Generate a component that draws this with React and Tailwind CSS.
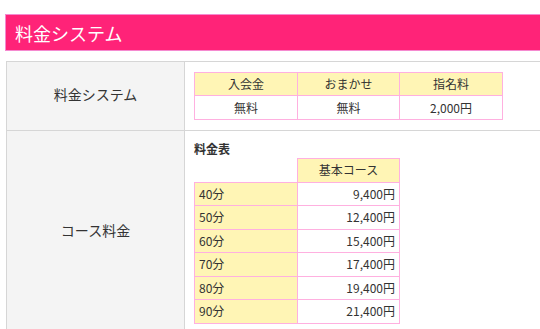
export default function App() {
  const rows = [
    ["40分", "9,400円"],
    ["50分", "12,400円"],
    ["60分", "15,400円"],
    ["70分", "17,400円"],
    ["80分", "19,400円"],
    ["90分", "21,400円"],
  ];
  const font = { fontFamily: '"Noto Sans CJK JP", "Noto Sans", sans-serif' };
  return (
    <div className="w-[540px] h-[329px] overflow-hidden bg-white" style={font}>
      <div className="w-[600px] pt-[14px] pl-[5px]">
        <div className="h-[37px] bg-[#ff2378] border border-[#f58ad0] flex items-center pl-[9px] text-white text-[18px] leading-none">
          料金システム
        </div>
        <table className="mt-[10px] ml-px w-[560px] border-collapse text-[#333]">
          <tbody>
            <tr>
              <th className="w-[178px] h-[69px] bg-[#f4f4f4] border border-[#d6d6d6] text-[14px] font-normal pb-[3px]">
                料金システム
              </th>
              <td className="border border-[#d6d6d6] align-top pl-[9px] pt-[10px]">
                <table className="border-collapse text-[12px]">
                  <tbody>
                    <tr className="h-[23px]">
                      <td className="w-[103px] bg-[#fff5b5] border border-[#ffb0e0] text-center p-0">入会金</td>
                      <td className="w-[102px] bg-[#fff5b5] border border-[#ffb0e0] text-center p-0">おまかせ</td>
                      <td className="w-[103px] bg-[#fff5b5] border border-[#ffb0e0] text-center p-0">指名料</td>
                    </tr>
                    <tr className="h-[24px]">
                      <td className="bg-white border border-[#ffb0e0] text-center p-0">無料</td>
                      <td className="bg-white border border-[#ffb0e0] text-center p-0">無料</td>
                      <td className="bg-white border border-[#ffb0e0] text-center p-0">2,000円</td>
                    </tr>
                  </tbody>
                </table>
              </td>
            </tr>
            <tr>
              <th className="bg-[#f4f4f4] border border-[#d6d6d6] text-[14px] font-normal">
                コース料金
              </th>
              <td className="border border-[#d6d6d6] align-top pl-[9px] pt-[10px] pb-[6px]">
                <div className="text-[12px] font-bold leading-[16px] mb-[1px]">料金表</div>
                <table className="border-collapse text-[12px]">
                  <tbody>
                    <tr className="h-[23.5px]">
                      <td className="w-[103px] p-0"></td>
                      <td className="w-[102px] bg-[#fff5b5] border border-[#ffb0e0] text-center p-0">基本コース</td>
                    </tr>
                    {rows.map(([a, b]) => (
                      <tr key={a} className="h-[23.5px]">
                        <td className="bg-[#fff5b5] border border-[#ffb0e0] text-left pl-[4px] p-0">{a}</td>
                        <td className="bg-white border border-[#ffb0e0] text-right pr-[4px] p-0">{b}</td>
                      </tr>
                    ))}
                  </tbody>
                </table>
              </td>
            </tr>
          </tbody>
        </table>
      </div>
    </div>
  );
}
